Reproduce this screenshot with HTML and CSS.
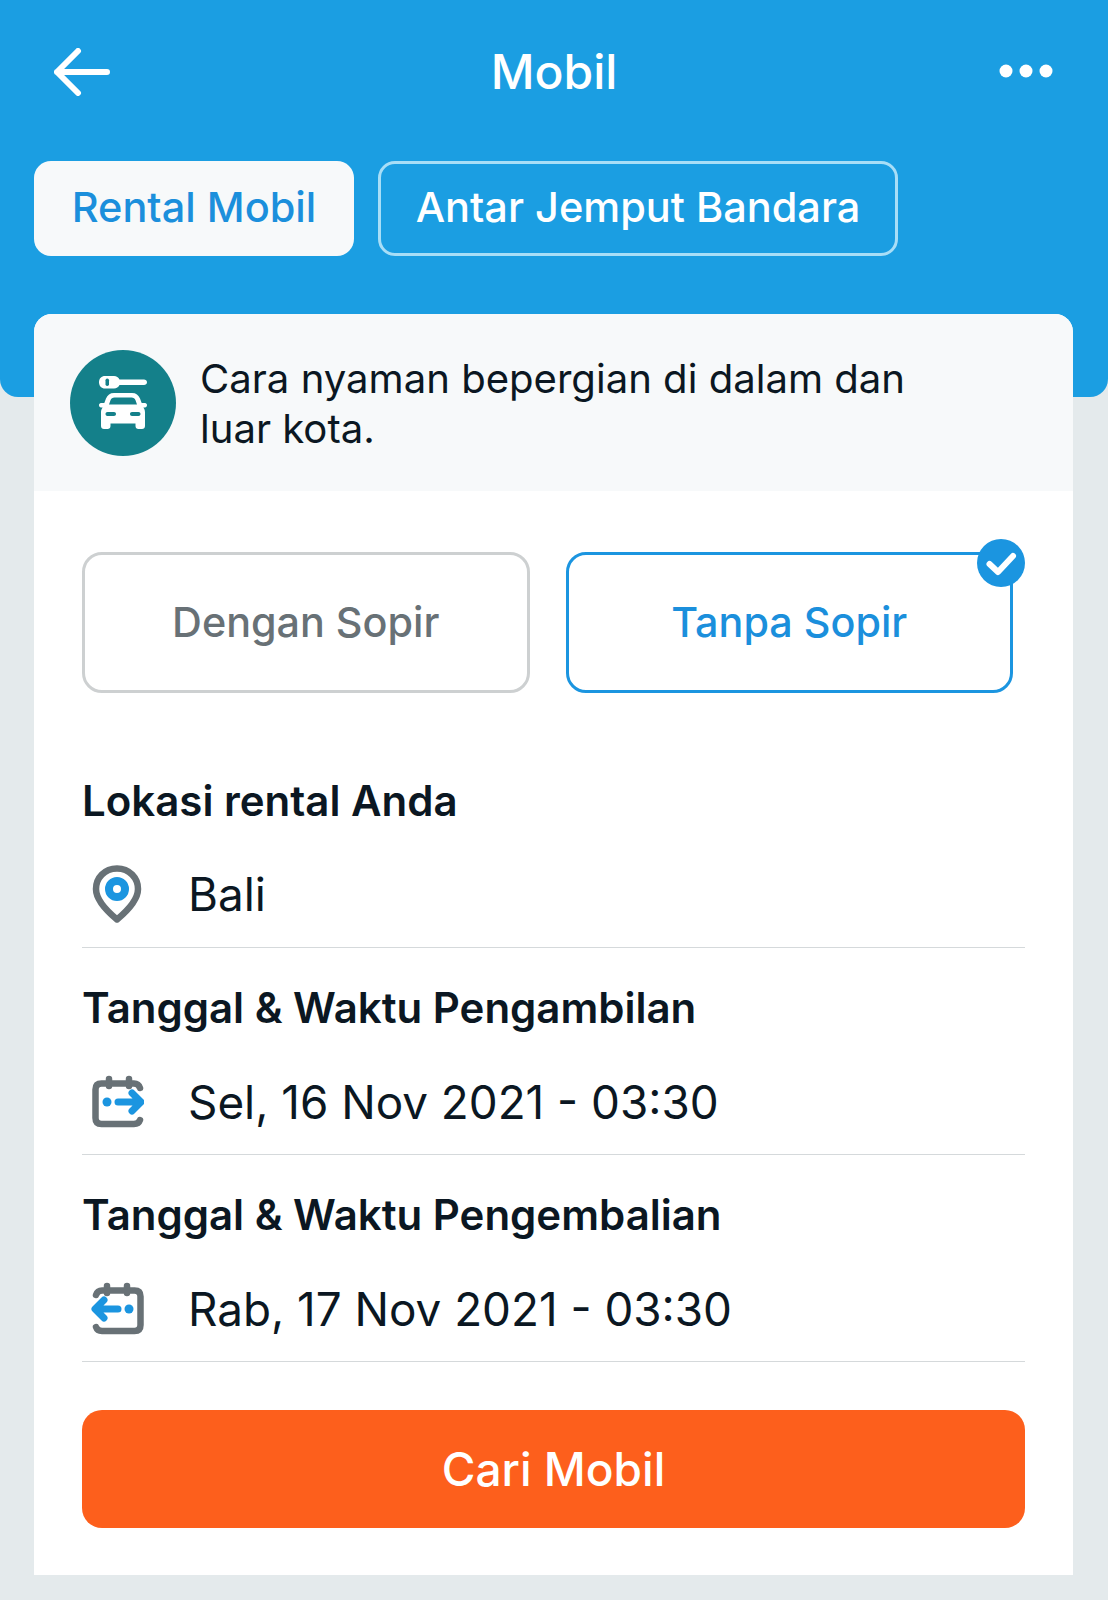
FILE: index.html
```html
<!DOCTYPE html>
<html lang="id">
<head>
<meta charset="utf-8">
<title>Mobil</title>
<link rel="stylesheet" href="styles.css">
</head>
<body>
<div class="page">
  <header class="hero">
    <div class="topbar">
      <svg class="back" viewBox="0 0 56 48" width="56" height="48" aria-hidden="true"><path d="M53 24H3M24 3 3 24l21 21" fill="none" stroke="#fff" stroke-width="6" stroke-linecap="round" stroke-linejoin="round"/></svg>
      <h1 class="title">Mobil</h1>
      <svg class="more" viewBox="0 0 54 14" width="54" height="14" aria-hidden="true"><circle cx="7" cy="7" r="6.500" fill="#fff"/><circle cx="27" cy="7" r="6.500" fill="#fff"/><circle cx="47" cy="7" r="6.500" fill="#fff"/></svg>
    </div>
    <div class="tabs">
      <div class="tab tab-active">Rental Mobil</div>
      <div class="tab tab-outline">Antar Jemput Bandara</div>
    </div>
  </header>

  <main class="card">
    <div class="banner">
      <div class="badge">
        <svg viewBox="0 0 48 54" width="48" height="54" aria-hidden="true">
          <path d="M6 0h9c2.500 0 4.500 1.500 5.500 3.500H45c1.500 0 3 1 3 2.750S46.500 9 45 9H20.500c-1 2-3 3.500-5.500 3.500H6c-3.500 0-6-2.500-6-6.250S2.500 0 6 0Z" fill="#fff"/>
          <rect x="6.500" y="2.500" width="3.500" height="7.500" rx="1.700" fill="#14808a"/>
          <path fill-rule="evenodd" d="M15 17h18c4 0 6.500 2 8 5.500l1.700 4.500H46c1.200 0 2 1 2 2.200s-.8 2.300-2 2.300h-1.600c1.100 1.500 1.600 3 1.600 5V50c0 2-1.200 3-3 3h-3.500c-1.800 0-3-1-3-3v-2.500h-25V50c0 2-1.200 3-3 3H5c-1.800 0-3-1-3-3V36.500c0-2 .5-3.500 1.600-5H2c-1.200 0-2-1.100-2-2.300S.8 27 2 27h3.300L7 22.500C8.500 19 11 17 15 17Zm.5 4.500c-2 0-3.300 1-4 2.700L10 28.500h28l-1.500-4.300c-.7-1.700-2-2.700-4-2.700h-17ZM8.500 36c-1.200 0-2 .8-2 2s.8 2 2 2H15c1.200 0 2-.8 2-2s-.8-2-2-2H8.500ZM33 36c-1.200 0-2 .8-2 2s.8 2 2 2h6.500c1.200 0 2-.8 2-2s-.8-2-2-2H33Z" fill="#fff"/>
        </svg>
      </div>
      <p class="banner-text">Cara nyaman bepergian di dalam dan luar kota.</p>
    </div>

    <div class="body">
      <div class="options">
        <div class="option">Dengan Sopir</div>
        <div class="option option-on">
          Tanpa Sopir
          <svg class="tick" viewBox="0 0 48 48" width="48" height="48" aria-hidden="true"><circle cx="24" cy="24" r="24" fill="#1b95e0"/><path d="M12.500 25l8.500 8 15-16" fill="none" stroke="#fff" stroke-width="6" stroke-linecap="round" stroke-linejoin="round"/></svg>
        </div>
      </div>

      <section class="field field-first">
        <h2 class="label">Lokasi rental Anda</h2>
        <div class="value">
          <svg class="ico" viewBox="0 0 54 58" width="54" height="58" aria-hidden="true"><path d="M27 3.500C14.500 3.500 6 13 6 24c0 11.500 12 23 21 30.500C36 47 48 35.500 48 24 48 13 39.500 3.500 27 3.500Z" fill="none" stroke="#687176" stroke-width="6.500" stroke-linejoin="round"/><circle cx="27" cy="24" r="8" fill="none" stroke="#1b95e0" stroke-width="8"/></svg>
          <span>Bali</span>
        </div>
      </section>

      <section class="field">
        <h2 class="label">Tanggal &amp; Waktu Pengambilan</h2>
        <div class="value">
          <svg class="ico" viewBox="0 0 54 58" width="54" height="58" aria-hidden="true"><path d="M50 15c-1-3-3-4.500-6-4.500H11.500c-4 0-6 2-6 6V45c0 4 2 6 6 6H44c3 0 5-1 6-4M19 6v7M39 6v7" fill="none" stroke="#687176" stroke-width="6.500" stroke-linecap="round"/><circle cx="17" cy="29" r="4.500" fill="#1b95e0"/><path d="M28 29h20M42 20l9 9-9 9" fill="none" stroke="#1b95e0" stroke-width="7" stroke-linecap="round" stroke-linejoin="round"/></svg>
          <span>Sel, 16 Nov 2021 - 03:30</span>
        </div>
      </section>

      <section class="field">
        <h2 class="label">Tanggal &amp; Waktu Pengembalian</h2>
        <div class="value">
          <svg class="ico" viewBox="0 0 54 58" width="54" height="58" aria-hidden="true"><path d="M6 15c1-3 3-4.500 6-4.500h32.500c4 0 6 2 6 6V45c0 4-2 6-6 6H12c-3 0-5-1-6-4M17 6v7M37 6v7" fill="none" stroke="#687176" stroke-width="6.500" stroke-linecap="round"/><circle cx="39" cy="29" r="4.500" fill="#1b95e0"/><path d="M28 29H8M14 20l-9 9 9 9" fill="none" stroke="#1b95e0" stroke-width="7" stroke-linecap="round" stroke-linejoin="round"/></svg>
          <span>Rab, 17 Nov 2021 - 03:30</span>
        </div>
      </section>

      <button class="cta" type="button">Cari Mobil</button>
    </div>
  </main>
</div>
</body>
</html>
```

FILE: styles.css
```css
* { box-sizing: border-box; }
html, body { margin: 0; padding: 0; }
body {
  width: 1108px;
  height: 1600px;
  overflow: hidden;
  background: #e4eaec;
  font-family: Inter, "Liberation Sans", sans-serif;
  color: #0b1722;
}
.page { position: relative; height: 1600px; }

.hero {
  height: 397px;
  background: #1b9ee2;
  border-radius: 0 0 18px 18px;
  padding: 48px 34px 0;
}
.topbar {
  display: flex;
  align-items: center;
  justify-content: space-between;
  height: 48px;
  padding: 0 20px;
  position: relative;
}
.back { display: block; }
.more { display: block; margin-top: -2px; margin-right: 1px; }
.title {
  position: absolute;
  left: 0;
  right: 0;
  top: 0;
  margin: 0;
  text-align: center;
  color: #fff;
  font-size: 48px;
  line-height: 48px;
  font-weight: 500;
}
.tabs { display: flex; gap: 24px; margin-top: 65px; }
.tab {
  height: 95px;
  padding-bottom: 3px;
  border-radius: 17px;
  display: flex;
  align-items: center;
  justify-content: center;
  font-size: 41.500px;
  font-weight: 500;
}
.tab-active { width: 320px; background: #f7f9fa; color: #1b8fdc; }
.tab-outline { width: 520px; border: 3px solid #a8def7; color: #fff; }

.card {
  position: absolute;
  left: 34px;
  top: 314px;
  width: 1039px;
  height: 1261px;
  background: #fff;
  border-radius: 18px 18px 0 0;
  overflow: hidden;
}
.banner {
  height: 177px;
  background: #f7f9fa;
  padding: 36px 36px 0;
  display: flex;
  gap: 24px;
}
.badge {
  flex: none;
  width: 106px;
  height: 106px;
  border-radius: 50%;
  background: #14808a;
  display: flex;
  align-items: center;
  justify-content: center;
}
.banner-text {
  margin: 4px 0 0;
  width: 740px;
  font-size: 40.100px;
  line-height: 50px;
  color: #0b1722;
}

.body { padding: 61px 48px 0; }
.options { display: flex; gap: 36px; width: 931px; }
.option {
  position: relative;
  width: 448px;
  height: 141px;
  padding-bottom: 2px;
  border: 3px solid #cdd0d1;
  border-radius: 20px;
  display: flex;
  align-items: center;
  justify-content: center;
  font-size: 41.300px;
  font-weight: 500;
  color: #687176;
}
.option-on { border-color: #1b95e0; color: #1b8fdc; }
.tick { position: absolute; top: -16px; right: -15px; }

.field { height: 207px; border-bottom: 1px solid #d5d9db; padding-top: 37px; }
.field-first { height: 255px; padding-top: 85px; }
.label {
  margin: 0;
  font-size: 42px;
  line-height: 46px;
  font-weight: 600;
  color: #0b1722;
}
.value {
  display: flex;
  align-items: center;
  gap: 44px;
  margin-top: 41px;
  height: 60px;
  padding-left: 8px;
  font-size: 45.800px;
  color: #0b1722;
}
.field-first .value { margin-top: 40px; }
.ico { flex: none; }

.cta {
  display: block;
  width: 100%;
  height: 118px;
  margin-top: 48px;
  padding-bottom: 2px;
  border: 0;
  border-radius: 20px;
  background: #fd5f1c;
  color: #fff;
  font-family: inherit;
  font-size: 46px;
  font-weight: 500;
}
```
